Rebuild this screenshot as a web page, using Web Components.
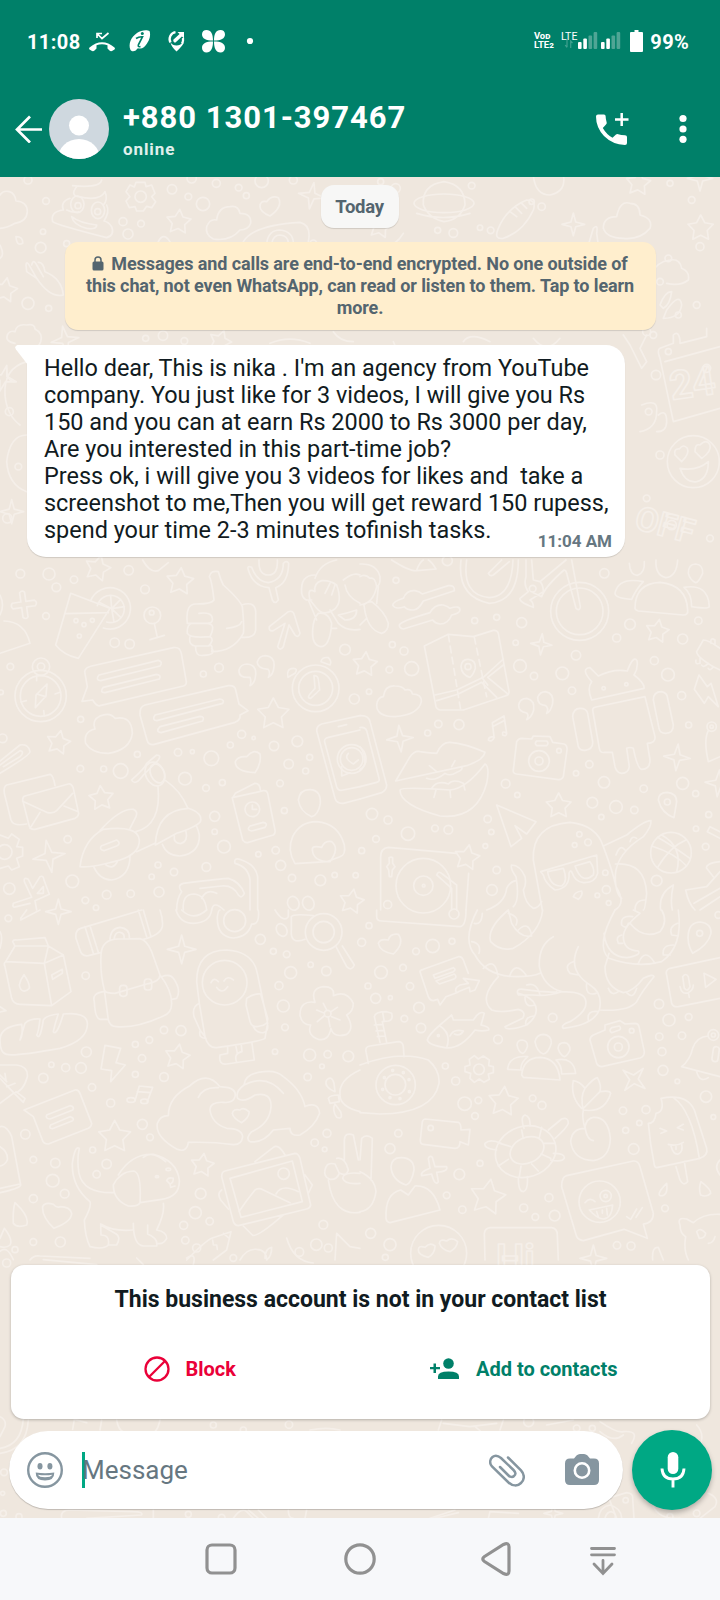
<!DOCTYPE html>
<html lang="en">
<head>
<meta charset="utf-8">
<title>Chat</title>
<style>
    html, body{
        margin: 0;
    }

    body{
        font-family: Roboto, "Liberation Sans", sans-serif;
        height: 1600px;
        overflow: hidden;
        width: 720px;
    }
</style>
</head>
<body>
<chat-screen>
    <status-bar slot="top" time="11:08" battery="99%"></status-bar>
    <app-bar slot="top">
        <span slot="name">+880 1301-397467</span>
        <span slot="state">online</span>
    </app-bar>
    <date-chip>Today</date-chip>
    <encryption-notice>Messages and calls are end-to-end encrypted. No one outside of<br>this chat, not even WhatsApp, can read or listen to them. Tap to learn<br>more.</encryption-notice>
    <message-bubble time="11:04 AM">Hello dear, This is nika . I'm an agency from YouTube
company. You just like for 3 videos, I will give you Rs
150 and you can at earn Rs 2000 to Rs 3000 per day,
Are you interested in this part-time job?
Press ok, i will give you 3 videos for likes and  take a
screenshot to me,Then you will get reward 150 rupess,
spend your time 2-3 minutes tofinish tasks.</message-bubble>
    <contact-card slot="bottom">
        <span slot="title">This business account is not in your contact list</span>
        <span slot="block">Block</span>
        <span slot="add">Add to contacts</span>
    </contact-card>
    <message-composer slot="bottom">Message</message-composer>
    <nav-bar slot="nav"></nav-bar>
</chat-screen>

<script>
class BaseElement extends HTMLElement
{
    constructor()
    {
        super();
        this.attachShadow({mode: "open"});
    }

    connectedCallback()
    {
        const template = document.createElement("template");
        template.innerHTML = `<style>${this.getStyles()}</style>${this.getTemplate()}`;
        this.shadowRoot.appendChild(template.content.cloneNode(true));
    }
}

class ChatScreen extends BaseElement
{
    getTemplate()
    {
        return `
            <slot name="top"></slot>
            <main>
                <chat-wallpaper></chat-wallpaper>
                <section><slot></slot></section>
                <footer><slot name="bottom"></slot></footer>
            </main>
            <slot name="nav"></slot>
        `;
    }

    getStyles()
    {
        return `
            :host{
                display: flex;
                flex-direction: column;
                height: 1600px;
                width: 720px;
            }

            main{
                background: #efe7de;
                display: flex;
                flex: 1;
                flex-direction: column;
                justify-content: space-between;
                min-height: 0;
                overflow: hidden;
                position: relative;
            }

            section{
                align-items: flex-start;
                display: flex;
                flex-direction: column;
                padding-top: 8px;
                position: relative;
            }

            footer{
                display: flex;
                flex-direction: column;
                gap: 11px;
                padding-bottom: 8px;
                position: relative;
            }
        `;
    }
}

class StatusBar extends BaseElement
{
    getTemplate()
    {
        return `
            <span class="time">${this.getAttribute("time")}</span>
            <svg class="left" width="170" height="28" viewBox="86 27 170 28" fill="#fff">
                <path d="M89.500 47.500Q102 37 114.500 47.500Q115.500 48.500 114.500 49.500L112 51Q110.500 51.500 109.500 50.500L107.500 48.500V45.300Q102 43 96.500 45.300V48.500L94.500 50.500Q93.500 51.500 92 51L89.500 49.500Q88.500 48.500 89.500 47.500Z"/>
                <path d="M97 38V33.500H102M97.500 34L102 38.500L108.500 33" fill="none" stroke="#fff" stroke-width="1.700"/>
                <path d="M130.500 50C128 44 131 37 137 33C141 30 147 29.500 149.500 31C151 35 149.500 40 147 43.500C145 47 142 49 139.500 48.500C138.500 48.500 138 47.500 137 49C135.500 51.500 132 52 130.500 50Z"/>
                <circle cx="142.300" cy="33.600" r="1.500" fill="#008069"/>
                <path d="M136 38.500Q139 36.500 142.500 36.800L138.500 44.500Q137.500 47.500 140.500 46.500" fill="none" stroke="#008069" stroke-width="1.700"/>
                <path d="M170.500 42.500Q172.500 45.500 176.500 45.500T182.500 42.500H184Q182 46.500 176.500 51.500Q171.500 47 170.500 42.500Z"/>
                <path d="M175.500 32.200A7 7 0 0 0 170.500 42.500M183 38Q183.500 41 182 43.500" fill="none" stroke="#fff" stroke-width="2.300"/>
                <path d="M177.500 32H184V38.500L181.900 36.400L175.500 42.500Q173 42.500 173.300 39.700L179.600 34.100Z"/>
                <path d="M213 40.500C206 40.500 202 38.500 202 34.200C202 31.500 204 30 206.500 30C211 30 213 34 213 40.500ZM214 40.500C214 34 216 30 220.500 30C223 30 225 31.500 225 34.200C225 38.500 221 40.500 214 40.500ZM213 41.600C213 48.500 211 52.500 206.500 52.500C204 52.500 202 50.500 202 48C202 43.500 206 41.600 213 41.600ZM214 41.600C221 41.600 225 43.500 225 48C225 50.500 223 52.500 220.500 52.500C216 52.500 214 48.500 214 41.600Z"/>
                <circle cx="250" cy="41" r="3.100"/>
            </svg>
            <span class="volte"><span>Vo<b>D</b></span><span>LTE<b>2</b></span></span>
            <span class="lte">LTE</span>
            <svg class="right" width="83" height="28" viewBox="560 27 83 28" fill="#fff">
                <path d="M567 40V47M565.200 45L567 47.500M570.700 48V41L572.500 43" fill="none" stroke="#40a08f" stroke-width="1.200"/>
                <rect x="578" y="42" width="3.600" height="7" rx="1"/>
                <rect x="583.300" y="38.500" width="3.600" height="10.500" rx="1"/>
                <rect x="588.500" y="35.500" width="3.600" height="13.500" rx="1" fill="#4fa595"/>
                <rect x="593.600" y="32" width="3.600" height="17" rx="1" fill="#4fa595"/>
                <rect x="601" y="42" width="3.600" height="7" rx="1"/>
                <rect x="606.300" y="38.500" width="3.600" height="10.500" rx="1"/>
                <rect x="611.500" y="35.500" width="3.600" height="13.500" rx="1" fill="#4fa595"/>
                <rect x="616.600" y="32" width="3.600" height="17" rx="1" fill="#4fa595"/>
                <path d="M634.500 30h4v2h3.500q1 0 1 1v18q0 1-1 1h-11q-1 0-1-1V33q0-1 1-1h3.500z"/>
            </svg>
            <span class="battery">${this.getAttribute("battery")}</span>
        `;
    }

    getStyles()
    {
        return `
            :host{
                align-items: center;
                background: #008069;
                box-sizing: border-box;
                color: #fff;
                display: flex;
                font-size: 20px;
                font-weight: 700;
                height: 84px;
                padding: 0 31px 2px 27px;
            }

            svg{
                flex: none;
            }

            .time{
                letter-spacing: .4px;
                padding-top: 2px;
                width: 59px;
            }

            .volte{
                display: flex;
                flex-direction: column;
                font: 700 9.500px/8.500px Roboto, sans-serif;
                margin-left: auto;
                width: 24px;
            }

            .volte b{
                font-size: 8px;
            }

            .lte{
                font: 400 10.500px/12px Roboto, sans-serif;
                margin: -9px -17px 0 3px;
            }

            .battery{
                letter-spacing: .3px;
                margin-left: 7px;
                padding-top: 2px;
            }
        `;
    }
}

class AppBar extends BaseElement
{
    getTemplate()
    {
        return `
            <svg class="back" width="28" height="28" viewBox="0 0 28 28" fill="none" stroke="#fff" stroke-width="2.700"><path d="M27 14.500H2M15 1.500L2 14.500L15 27.500"/></svg>
            <svg class="avatar" width="60" height="60" viewBox="0 0 60 60">
                <clipPath id="round"><circle cx="30" cy="30" r="30"/></clipPath>
                <g clip-path="url(#round)">
                    <rect width="60" height="60" fill="#cfd8df"/>
                    <circle cx="30" cy="26.500" r="10" fill="#fff"/>
                    <ellipse cx="30" cy="60" rx="21" ry="20" fill="#fff"/>
                </g>
            </svg>
            <div class="who">
                <slot name="name"></slot>
                <slot name="state"></slot>
            </div>
            <svg class="call" width="34" height="34" viewBox="0 0 34 34">
                <path fill="#fff" d="M1 4.500Q1 2.500 3 2.500H9Q10.500 2.500 10.600 4Q10.700 7.500 11.700 10.500Q12 11.700 11 12.500L7.800 16Q11.500 22.500 17.500 25.800L21 22.500Q22 21.700 23.200 22.200Q26 23 30 23.300Q32 23.400 32 25V31Q32 33 30 33Q17.500 32.500 9 24Q1 15.500 1 4.500Z"/>
                <path d="M26.700 1V14M20 7.500H33.500" stroke="#fff" stroke-width="2.500"/>
            </svg>
            <svg class="more" width="8" height="30" viewBox="0 0 8 30" fill="#fff"><circle cx="4" cy="4.500" r="3.600"/><circle cx="4" cy="15" r="3.600"/><circle cx="4" cy="25.300" r="3.600"/></svg>
        `;
    }

    getStyles()
    {
        return `
            :host{
                align-items: center;
                background: #008069;
                box-sizing: border-box;
                color: #fff;
                display: flex;
                height: 93px;
                padding: 0 33px 3px 15px;
            }

            svg{
                flex: none;
            }

            .avatar{
                margin: 0 14px 0 6px;
            }

            .who{
                display: flex;
                flex: 1;
                flex-direction: column;
                padding-top: 3px;
                white-space: nowrap;
            }

            ::slotted([slot="name"]){
                font-size: 31px;
                font-weight: 700;
                letter-spacing: .950px;
                line-height: 36px;
            }

            ::slotted([slot="state"]){
                color: #e0f0ed;
                font-size: 17px;
                font-weight: 700;
                letter-spacing: .9px;
                line-height: 24px;
                margin-top: 1px;
            }

            .call{
                margin-right: 50px;
            }
        `;
    }
}

class DateChip extends BaseElement
{
    getTemplate()
    {
        return `<slot></slot>`;
    }

    getStyles()
    {
        return `
            :host{
                align-self: center;
                background: #f7f7f6;
                border-radius: 13px;
                box-shadow: 0 1px 1px rgba(0, 0, 0, .13);
                box-sizing: border-box;
                color: #54656f;
                font: 700 18.500px/44px Roboto, sans-serif;
                height: 43px;
                letter-spacing: -.3px;
                margin-right: 1px;
                text-align: center;
                width: 78px;
            }
        `;
    }
}

class EncryptionNotice extends BaseElement
{
    getTemplate()
    {
        return `<svg width="12" height="15" viewBox="0 0 12 15"><path d="M3 7V4Q3 1 6 1T9 4V7" fill="none" stroke="#54656f" stroke-width="1.500"/><rect x=".5" y="5.500" width="11" height="9" rx="1.500" fill="#54656f"/></svg><slot></slot>`;
    }

    getStyles()
    {
        return `
            :host{
                align-self: center;
                background: #ffeecd;
                border-radius: 13px;
                box-shadow: 0 1px 1px rgba(0, 0, 0, .13);
                box-sizing: border-box;
                color: #54656f;
                display: block;
                font: 700 18px/22px Roboto, sans-serif;
                height: 88px;
                letter-spacing: -.1px;
                margin-top: 14px;
                padding-top: 11px;
                text-align: center;
                white-space: nowrap;
                width: 591px;
            }

            svg{
                margin-right: 7px;
                vertical-align: -1px;
            }
        `;
    }
}

class MessageBubble extends BaseElement
{
    getTemplate()
    {
        return `
            <svg width="13" height="20" viewBox="0 0 13 20"><path d="M2.500 0H13V20L1 4.500Q-1 1 2.500 0Z" fill="#fff"/></svg>
            <p><slot></slot></p>
            <time>${this.getAttribute("time")}</time>
        `;
    }

    getStyles()
    {
        return `
            :host{
                background: #fff;
                border-radius: 0 19px 19px 19px;
                box-shadow: 0 1px 1px rgba(0, 0, 0, .13);
                box-sizing: border-box;
                color: #111b21;
                display: grid;
                height: 212px;
                margin: 15px 0 0 27px;
                padding: 10px 13px 5px 17px;
                position: relative;
                width: 598px;
            }

            svg{
                left: -12px;
                position: absolute;
                top: 0;
            }

            p{
                font-size: 23.450px;
                grid-area: 1 / 1;
                line-height: 27px;
                margin: 0;
                white-space: pre;
            }

            time{
                align-self: end;
                color: #667781;
                font: 700 17px/20px Roboto, sans-serif;
                grid-area: 1 / 1;
                justify-self: end;
                margin-bottom: 1px;
            }
        `;
    }
}

class ContactCard extends BaseElement
{
    getTemplate()
    {
        return `
            <slot name="title"></slot>
            <div class="actions">
                <button class="block">
                    <svg width="26" height="26" viewBox="0 0 26 26" fill="none" stroke="#ea0038" stroke-width="2.300"><circle cx="13" cy="13" r="11.500"/><path d="M21 5L5 21"/></svg>
                    <slot name="block"></slot>
                </button>
                <button class="add">
                    <svg width="30" height="22" viewBox="0 0 30 22" fill="#008069"><circle cx="18.500" cy="5.500" r="5.300"/><path d="M8 21V18.500Q8 13.500 18.500 13.500T29 18.500V21ZM3.500 5.500H6V9H10V11.300H6V15H3.500V11.300H0V9H3.500Z"/></svg>
                    <slot name="add"></slot>
                </button>
            </div>
        `;
    }

    getStyles()
    {
        return `
            :host{
                background: #fff;
                border-radius: 13px;
                box-shadow: 0 1px 3px rgba(0, 0, 0, .25);
                box-sizing: border-box;
                color: #111b21;
                display: flex;
                flex-direction: column;
                height: 154px;
                margin: 0 10px 0 11px;
                padding-top: 21px;
            }

            ::slotted([slot="title"]){
                font-size: 23px;
                font-weight: 700;
                line-height: 27px;
                text-align: center;
            }

            .actions{
                display: grid;
                grid-template-columns: 1fr 1fr;
                margin-top: 43px;
            }

            button{
                align-items: center;
                background: none;
                border: 0;
                display: flex;
                font: 700 20px/26px Roboto, sans-serif;
                gap: 16px;
                justify-content: center;
                padding: 0;
            }

            .block{
                color: #ea0038;
                padding-left: 8px;
            }

            .add{
                color: #008069;
                padding-right: 23px;
            }
        `;
    }
}

class MessageComposer extends BaseElement
{
    getTemplate()
    {
        return `
            <div class="field">
                <svg width="36" height="36" viewBox="0 0 36 36">
                    <circle cx="18" cy="18" r="16.800" fill="none" stroke="#8696a0" stroke-width="2.400"/>
                    <ellipse cx="13" cy="14.200" rx="2.500" ry="3.200" fill="#8696a0"/>
                    <ellipse cx="22.900" cy="14.200" rx="2.500" ry="3.200" fill="#8696a0"/>
                    <path d="M8.700 20.500Q18 21.800 27.300 20.500Q27.500 28.500 18 28.500T8.700 20.500Z" fill="#8696a0"/>
                    <path d="M11 22.800Q18 23.800 25.300 22.800Q24 25.300 18 25.300T11 22.800Z" fill="#fff"/>
                </svg>
                <i></i>
                <span class="hint"><slot></slot></span>
                <svg width="36" height="33" viewBox="0 0 36 33" fill="none" stroke="#8696a0" stroke-width="2.500" stroke-linecap="round"><path d="M19 3.500L32 16.300C36 20.500 35.500 26 32 29C28.500 32.500 23.500 32 19.500 28.500L3 12.500C0 9 1 5 3.500 3C6 1 9 1.500 12 4L24.500 16C27 18.500 27 20.500 25 22C23.500 23.500 21 23 19.500 21.500L11 13"/></svg>
                <svg class="camera" width="34" height="31" viewBox="0 0 34 31"><path d="M5 4.500H9L11.500 1.500Q13 0 15 0H19Q21 0 22.500 1.500L25 4.500H29Q34 4.500 34 9.500V26Q34 31 29 31H5Q0 31 0 26V9.500Q0 4.500 5 4.500Z" fill="#8696a0"/><circle cx="17" cy="16.500" r="7.200" fill="#8696a0" stroke="#fff" stroke-width="2.600"/></svg>
            </div>
            <button>
                <svg width="26" height="36" viewBox="0 0 26 36"><rect x="7.700" y="0" width="10.600" height="22" rx="5.300" fill="#fff"/><path d="M2 16.500Q2.500 27 13 27T24 16.500M13 27V35.500" fill="none" stroke="#fff" stroke-width="2.900"/></svg>
            </button>
        `;
    }

    getStyles()
    {
        return `
            :host{
                align-items: center;
                display: flex;
                gap: 9px;
                padding: 0 8px 0 9px;
            }

            .field{
                align-items: center;
                background: #fff;
                border-radius: 39px;
                box-shadow: 0 1px 1px rgba(0, 0, 0, .2);
                box-sizing: border-box;
                color: #667781;
                display: flex;
                flex: 1;
                font-size: 26px;
                height: 78px;
                padding: 0 24px 0 18px;
            }

            i{
                background: #00a884;
                height: 36px;
                margin: 0 -3px 0 19px;
                width: 3px;
            }

            .hint{
                flex: 1;
            }

            .camera{
                margin: -2px 0 0 40px;
            }

            button{
                align-items: center;
                background: #00a884;
                border: 0;
                border-radius: 50%;
                box-shadow: 0 3px 5px rgba(0, 0, 0, .25);
                display: flex;
                height: 80px;
                justify-content: center;
                padding: 0 0 0 1px;
                width: 80px;
            }
        `;
    }
}

class NavBar extends BaseElement
{
    getTemplate()
    {
        return `
            <svg width="32" height="34" viewBox="0 0 32 34"><rect x="2" y="3" width="28" height="28" rx="5"/></svg>
            <svg width="32" height="34" viewBox="0 0 32 34"><circle cx="16" cy="17" r="14.200"/></svg>
            <svg width="30" height="34" viewBox="0 0 30 34"><path d="M3.500 14.500L22.500 2.500Q28 0 28 5V29Q28 34 22.500 31.500L3.500 19.500Q0 17 3.500 14.500Z"/></svg>
            <svg width="26" height="34" viewBox="0 0 26 34" style="stroke-linecap: round"><path d="M1.500 6.500H24.500M1.500 12.800H24.500M13 18.500V31.500M4 22L13 31.500L22 22"/></svg>
        `;
    }

    getStyles()
    {
        return `
            :host{
                background: #f7f8fa;
                box-sizing: border-box;
                display: flex;
                height: 82px;
                padding: 24px 0 0 205px;
            }

            svg{
                fill: none;
                stroke: #919191;
                stroke-width: 3.200px;
            }

            svg:nth-of-type(2){
                margin-left: 107px;
            }

            svg:nth-of-type(3){
                margin-left: 105px;
            }

            svg:nth-of-type(4){
                margin-left: 79px;
                stroke-width: 2.800px;
            }
        `;
    }
}

// Wallpaper panels. Doodles are drawn on a 3x grid, "at" is the panel's corner on the screen.
const panels = [
    {
        at: [0, 175],
        dots: "84 15 12 138 78 10 129 170 8 122 218 16 84 385 18 146 400 9 516 43 14 565 65 10 649 25 12 716 38 10 739 62 9 785 18 20 609 87 20 369 140 12 423 146 10 384 177 15 437 490 9 489 482 14 553 498 10 575 10 14 880 15 12 940 205 10 200 206 9",
        stars: "536 141 38 5 15 346 38 10 660 500 35 20",
        sparks: "935 62 40 10 195 495 42 -10 10 610 40 15",
        paths: `
            <path d="M0 60Q10 45 28 50Q45 55 48 78Q82 80 82 110Q80 140 45 145Q20 160 0 160"/>
            <path d="M218 32Q300 40 305 15M230 35Q210 60 235 65Q300 80 315 50Q325 75 310 90M210 70Q180 80 190 105Q150 110 158 140Q170 150 320 188Q345 180 335 155Q325 140 312 138Q330 110 320 90M200 105Q220 115 235 110M215 125Q240 145 290 150Q290 165 260 160Q220 150 215 125"/>
            <ellipse cx="232" cy="88" rx="20" ry="25"/><ellipse cx="294" cy="106" rx="20" ry="25"/><circle cx="234" cy="92" r="9"/><circle cx="293" cy="110" r="9"/>
            <circle cx="422" cy="65" r="17"/><path d="M408 22L435 22L438 35L455 30L465 55L455 65L467 80L455 98L440 94L430 108H410L405 95L388 98L378 78L390 65L378 50L390 30L403 36Z"/>
            <path d="M780 95Q780 75 800 80Q815 60 835 68Q850 95 810 123Q780 110 780 95Z"/>
            <path d="M640 192Q615 180 620 155Q630 130 650 135Q655 95 690 95Q715 90 720 115Q755 115 752 145Q745 165 720 165Q690 200 640 192Z"/>
            <path d="M730 200Q760 150 900 142Q935 150 925 200M800 205Q805 165 840 165Q880 170 880 205M815 205Q820 180 840 180Q865 182 865 205M475 200Q490 170 510 200"/>
            <path d="M80 290L78 270Q80 255 90 275L110 310M95 270Q100 250 110 270L130 305M115 262Q130 260 135 290Q185 310 190 360Q150 370 110 310L80 290"/>
            <path d="M45 505Q15 500 22 480Q30 465 45 470Q50 445 80 450Q105 445 105 462Q130 475 122 500Q115 520 95 515"/>
            <path d="M48 185Q70 185 68 205Q50 215 48 185ZM0 210Q15 240 0 250M810 505Q870 480 930 505M1000 470Q1020 500 1060 500"/>`
    },
    {
        at: [360, 175],
        dots: "62 20 9 107 40 14 335 32 10 360 158 8 392 166 10 233 166 9 280 174 13 515 80 8 545 95 11 930 25 9 995 75 10 1020 215 12 925 250 10 1010 390 10 900 320 10 955 420 9 880 480 10 925 530 9 1040 580 12",
        stars: "835 25 38 5 1022 160 40 0 60 155 36 10",
        sparks: "640 148 34 0 1020 10 38 0",
        paths: `
            <ellipse cx="252" cy="85" rx="90" ry="28"/><path d="M190 90Q185 30 252 20Q315 30 315 90Q300 135 252 140Q205 130 190 90M170 115Q250 140 330 115"/>
            <path d="M430 190Q400 195 415 160Q440 100 500 75Q530 75 520 105Q490 170 430 190ZM450 110L470 125M465 95L485 115M485 85L500 100"/>
            <path d="M520 0Q525 60 570 60Q620 50 610 0M730 160Q730 125 770 125Q780 75 810 85Q840 85 840 120Q880 130 870 160Q840 195 790 190Q740 190 730 160Z"/>
            <path d="M685 210L700 160Q715 145 710 175L715 210M50 210Q100 225 130 175M80 300Q100 340 160 350M870 300Q890 260 930 255Q960 250 965 280Q990 290 985 315Q960 335 920 325"/>
            <path d="M900 390Q915 350 935 350Q930 390 910 400ZM920 405Q960 350 965 390Q960 430 910 430ZM790 480L810 510L845 580L860 560L840 520L860 480M100 500L125 560M310 500Q330 470 390 500M520 490Q560 540 600 490"/>`
    },
    {
        at: [640, 325],
        dots: "20 20 12 48 150 14 26 260 10 60 390 12 20 520 10 95 600 14 210 640 10",
        stars: "",
        sparks: "",
        paths: `
            <path d="M60 70L100 55V30Q115 15 120 45V55L200 35V10M60 70Q50 75 60 100L100 290L240 250M75 110L240 65"/>
            <text x="95" y="225" font-size="120" font-weight="bold" transform="rotate(-8 95 225)">24</text>
            <path d="M5 240Q55 220 50 260Q50 310 0 320M55 270Q80 250 80 290Q80 320 50 320"/>
            <circle cx="160" cy="410" r="78"/><path d="M105 390Q100 370 118 372Q130 355 142 370Q150 385 125 410ZM165 380Q165 355 180 360Q200 340 210 360Q215 380 185 400ZM120 430Q170 440 205 410Q205 460 170 470Q135 475 120 430Z"/>
            <text x="-20" y="610" font-size="100" font-weight="bold" transform="rotate(15 -20 610)">OFF</text>`
    },
    {
        at: [0, 345],
        dots: "28 200 12 55 365 10 22 520 14",
        stars: "",
        sparks: "35 500 36 0",
        paths: `<path d="M80 50Q10 70 15 150Q20 210 60 240M80 270Q30 270 20 350Q25 420 80 440M20 70Q20 110 45 110"/>`
    },
    {
        at: [0, 560],
        dots: "61 41 13 147 42 18 222 59 11 386 31 14 169 82 13 435 88 13 138 168 10 344 248 14 389 252 14 31 320 10 610 342 9 657 323 13 242 478 9 412 583 9 534 577 11 577 575 6 634 595 22 691 555 9 725 523 12 761 534 5 822 558 14 892 544 16 929 592 9 866 612 14 917 633 9 241 626 10 311 627 9 362 633 22 555 656 19 618 684 10 667 668 9 644 769 15 644 815 8 672 860 19 853 752 9 840 670 10 775 883 8 827 871 11 842 916 15 203 838 11 217 964 19 28 986 17 320 1004 13 392 1001 11 256 1021 10 288 1043 8 477 996 15 522 936 11 455 950 8 474 915 9 619 921 13 876 954 11 961 961 16 1004 945 8 1067 946 8 1035 269 16 1063 417 15 8 535 13 3 397 7",
        stars: "293 25 40 15 540 65 42 5 175 548 37 12 820 463 49 0 304 715 38 -5 1055 1025 38 10",
        sparks: "147 889 49 -10",
        paths: `
            <g transform="rotate(-8 71 135)"><path d="M64 97Q72 90 79 97V125H105Q115 133 105 142H79V172Q72 180 64 172V142H38Q30 133 38 125H64Z"/></g>
            <path d="M212 100L330 145L235 295Q190 285 167 255ZM196 161L325 158"/><path d="M272 122A62 62 0 1 1 310 204M292 137A41 41 0 1 1 320 186M335 146L332 108M335 146L362 118M335 146L373 140M335 146L362 172M335 146L342 186M335 146L300 128"/>
            <circle cx="228" cy="182" r="6"/><circle cx="252" cy="194" r="6"/><circle cx="277" cy="181" r="6"/><circle cx="238" cy="228" r="6"/>
            <circle cx="457" cy="166" r="25"/><circle cx="455" cy="158" r="7"/><path d="M463 191L472 232M450 239L493 226"/>
            <path d="M562 190Q555 130 590 132Q635 132 642 120Q635 60 628 50Q632 30 655 35Q662 60 670 75Q720 120 727 140Q733 200 730 220Q700 275 635 275Q640 250 625 258Q645 240 630 230Q650 190 620 190Q640 190 637 175Q635 155 597 160M562 190H625M575 190Q560 195 562 220Q570 235 630 230M570 230Q565 255 585 258H625M587 258Q585 290 610 286Q650 285 635 265M680 205Q720 200 725 185M725 135Q770 120 767 165V210Q765 235 725 232"/>
            <path d="M428 0Q450 40 475 32L505 8M745 30Q740 15 755 22Q770 65 805 68Q850 60 850 10Q860 0 866 10Q865 70 827 83L835 120Q825 135 817 120L807 83Q760 80 745 30ZM777 0Q775 45 805 45Q835 45 832 0"/>
            <path d="M808 200L865 155Q880 150 883 165L900 220Q895 235 885 225L867 195L850 260Q840 275 833 260L855 190L820 212Q805 215 808 200Z"/>
            <path d="M945 55Q960 10 1010 0M945 45Q900 45 905 100Q910 125 935 120M925 120L950 180M930 120Q920 80 945 95Q940 70 965 62Q990 60 1010 75Q1030 130 1000 150Q970 170 950 145ZM975 100L990 70M995 105L1005 75M990 150L1015 190Q1040 215 1080 208M955 160Q985 155 995 190Q990 260 962 260Q935 255 938 210Q940 175 955 160M1035 75Q1040 110 1080 130M1030 60Q1060 35 1080 45M1015 165Q1040 160 1070 150Q1070 180 1035 180ZM995 205H1010"/>
            <path d="M12 183Q75 185 90 250L0 280M0 105Q15 135 0 165"/>
            <circle cx="122" cy="408" r="77"/><circle cx="122" cy="408" r="61"/><circle cx="123" cy="320" r="26"/><circle cx="123" cy="320" r="11"/><path d="M141 372L108 405L106 443L138 408ZM110 402L137 410M110 348V362M165 402L180 397M131 452L133 468M63 426L79 422"/>
            <path d="M275 318L520 263Q540 260 544 280L559 365Q560 375 550 378L300 437Q290 440 278 420L246 424L262 380L254 335Q256 322 275 318Z"/>
            <path d="M297 345L475 301Q490 305 480 318L302 362Q285 360 297 345ZM310 382L470 343Q485 345 478 357L315 398Q297 398 310 382Z"/>
            <path d="M435 435L685 377Q705 375 707 390L717 432L744 452L720 465Q722 480 705 487L460 554Q445 555 441 540L420 465Q418 440 435 435Z"/>
            <path d="M465 465L660 417Q675 420 668 430L470 482Q455 480 465 465ZM480 500L600 469Q615 470 608 483L483 518Q465 515 480 500Z"/>
            <path d="M742 312Q770 315 767 345Q765 370 750 377Q755 365 750 352Q715 355 717 330Q722 312 742 312ZM797 287Q825 290 822 320Q820 345 805 352Q812 340 805 328Q770 325 772 305Q778 287 797 287Z"/>
            <circle cx="947" cy="385" r="70"/><circle cx="947" cy="385" r="51"/><path d="M942 347Q955 345 956 365L959 390L932 415Q920 415 930 402L945 385ZM864 352Q858 325 880 325Q895 325 885 340ZM963 305Q965 290 985 293Q997 305 990 315Z"/>
            <path d="M345 475Q330 455 300 468Q275 480 285 507Q250 515 257 550Q275 580 325 580Q390 570 397 520Q395 465 345 475Z"/>
            <path d="M0 603L60 555Q85 550 90 575Q90 585 0 640M0 615L60 572Q75 575 60 590L10 620"/>
            <path d="M706 605Q712 588 740 590Q760 565 780 582Q785 610 765 638Q705 635 706 605Z"/>
            <path d="M20 675L150 643Q160 645 165 677M20 675Q10 680 13 700L33 780Q40 800 80 792M75 708L205 672Q215 670 220 685L236 760Q235 770 225 775L105 808Q90 810 87 795L68 720Q68 710 75 708ZM68 724L140 757Q160 762 170 752L218 700M90 805L120 757M192 738L235 755"/>
            <path d="M395 660Q435 625 440 610L470 585Q485 585 475 600L430 645Q405 680 395 660Z"/><ellipse cx="465" cy="642" rx="28" ry="37" transform="rotate(-25 465 642)"/><ellipse cx="472" cy="640" rx="20" ry="30" transform="rotate(-25 472 640)"/>
            <path d="M474 680Q485 795 408 815M497 662Q540 690 564 745M300 812Q360 745 400 748Q415 755 408 770L390 805M240 920Q250 840 310 808Q415 795 418 840Q420 880 360 900Q270 925 240 920ZM466 855Q470 750 565 745Q610 760 601 785Q590 800 530 820ZM410 875L465 850M305 857L350 840Q365 850 350 858L312 872Q295 868 305 857ZM282 922Q300 960 335 960Q390 950 390 887M318 915Q340 930 352 905M487 853Q500 888 540 888Q600 880 598 825Q595 810 590 800M523 828Q520 850 542 851Q565 845 558 815"/>
            <path d="M706 700Q700 710 697 715L728 840Q735 850 745 847L820 825Q827 820 825 810L803 700Q800 690 790 692L697 713M706 700L765 670Q780 670 781 690"/><circle cx="757" cy="748" r="22"/><path d="M757 735V748H770M750 798L790 787Q805 790 795 802L755 813Q738 810 750 798Z"/>
            <path d="M1080 467L965 492Q945 500 952 520L1005 715Q1010 732 1030 730L1080 717M1080 510L985 532Q970 535 975 550L1010 680Q1015 695 1030 690L1080 680M1015 500L1040 494"/><circle cx="1055" cy="597" r="43"/><circle cx="1055" cy="597" r="34"/><path d="M1045 580Q1030 595 1060 612L1075 600M1025 620V648L1050 638"/>
            <path d="M895 720Q900 688 930 689Q963 690 961 730Q955 765 935 770Q900 755 895 720ZM885 911Q860 870 878 830Q900 785 950 785Q1015 790 1033 855Q1038 885 1020 890L980 905ZM937 870Q935 855 965 862Q975 840 995 845Q1020 865 990 905Q940 905 937 870Z"/>
            <circle cx="14" cy="876" r="22"/><path d="M0 825L25 835L35 822L58 838L50 860L68 862V888L50 895L58 920L35 930L25 918L0 925"/>
            <path d="M73 965Q70 950 85 958L98 985L120 950Q130 945 132 960L148 1003L105 1022L110 1050M73 965L95 1012L40 1030Q35 1045 50 1040L90 1030M130 980L112 1000L130 1000Z"/>
            <path d="M705 910Q700 890 725 900Q768 915 773 950V1050M705 910Q745 920 750 960V1050M550 970Q670 955 685 955Q720 965 733 1000Q725 1018 715 1005Q700 975 665 978L600 985M550 970Q530 975 545 995Q530 1015 530 1050M550 1050Q545 1002 583 1002Q615 1005 620 1050M605 1015Q620 985 650 1000M635 1050Q640 1020 672 1050"/>
            <ellipse cx="880" cy="1030" rx="17" ry="21" transform="rotate(-20 880 1030)"/><ellipse cx="925" cy="1030" rx="17" ry="21" transform="rotate(-20 925 1030)"/>`
    },
    {
        at: [360, 560],
        dots: "108 61 9 262 2 15 344 182 9 410 172 9 485 188 15 467 248 8 97 254 9 132 273 12 155 326 21 88 329 10 27 395 8 480 318 19 522 348 11 607 340 19 648 286 14 636 392 11 235 492 11 297 494 15 203 519 9 688 613 11 648 640 8 437 671 13 472 705 8 733 40 14 810 193 16 770 234 12 968 237 15 1015 182 11 883 302 12 924 344 19 965 407 12 986 495 9 732 667 17 851 686 11 968 670 18 1007 701 9 697 728 16 768 741 19 823 750 11 724 771 8 1046 764 9 1008 806 8 383 777 11 394 816 8 36 762 17 84 780 12 144 821 20 225 805 10 265 809 13 48 837 10 376 858 7 5 872 9 410 930 11 396 990 16 83 1034 12 890 962 16 1037 860 10 658 823 8 684 847 10 644 855 7 736 938 8 739 989 12 712 1006 7 746 1029 7",
        stars: "15 313 38 5 892 214 36 10 596 738 39 0 321 893 39 10",
        sparks: "544 253 32 5 120 536 40 -5 951 592 40 5 1075 670 40 5",
        paths: `
            <path d="M95 0Q150 35 170 32L228 27Q215 5 205 0M170 30Q180 5 190 0M0 12Q50 10 60 50Q62 75 50 80M55 80L50 130M0 135Q40 130 50 80Q45 50 30 55Q15 40 0 50M12 135Q20 125 35 125Q75 155 85 190Q85 215 65 220Q20 210 12 135M0 195L20 175"/>
            <path d="M98 135Q100 125 130 115Q140 90 165 92Q180 95 187 102L265 77Q285 75 283 92L190 123Q175 150 160 150Q140 150 133 140Q105 150 98 135ZM118 195Q120 185 210 158Q225 132 250 135Q265 140 270 145Q300 135 300 150Q300 160 275 165Q265 192 240 192Q225 190 218 180L130 207Q118 205 118 195Z"/>
            <path d="M303 0Q290 110 388 130Q475 125 475 0M320 0Q305 105 388 113Q455 110 459 0M425 0L385 40Q390 50 400 45L448 5M498 0V50Q490 75 505 95L480 115Q475 125 520 142Q520 125 510 120L550 95Q550 75 540 65L618 0M515 0L520 60L540 65M520 98L545 110Q555 80 612 30Q618 30 620 40L648 145Q660 155 661 140L635 0"/><circle cx="659" cy="154" r="87"/><circle cx="659" cy="154" r="70"/><circle cx="518" cy="86" r="10"/>
            <path d="M808 10Q810 45 832 46Q855 40 853 5M888 0Q885 45 917 53Q950 50 953 0M985 40Q985 12 1007 12Q1030 15 1028 40Q1015 68 1007 68Q990 60 985 40ZM825 145Q825 70 900 67Q980 75 983 150Q985 165 970 165L835 153Q825 150 825 145ZM765 100Q775 50 850 65Q830 85 815 118Q765 115 765 100ZM972 82Q1045 70 1048 140Q1045 148 995 140Q995 100 972 82Z"/>
            <path d="M193 258L265 223L340 230L400 211Q412 210 415 220L447 395Q448 405 435 408L310 450L240 450Q230 448 228 440ZM225 405L290 390L370 352L430 297M230 422L295 402L365 367L410 412M383 352L445 403M383 352L430 315M365 352L383 375"/><path stroke-dasharray="20 14" d="M265 225L302 450M343 232L380 410"/>
            <path d="M303 320Q305 297 325 298Q348 300 346 325Q340 345 330 352Q305 345 303 320Z"/><circle cx="324" cy="320" r="9"/>
            <path d="M70 410Q75 375 105 378Q128 378 135 390Q155 385 157 402Q185 402 184 425Q175 465 105 470Q50 470 50 435Q52 412 70 410Z"/>
            <path d="M500 415Q525 420 521 450Q515 472 500 479Q508 465 500 459Q475 455 476 435Q480 415 500 415ZM557 395Q582 400 578 430Q572 455 560 460Q567 445 557 437Q532 435 533 412Q540 395 557 395Z"/>
            <path d="M402 530L397 488L432 468L440 520M397 500L432 482M402 530Q385 530 385 540Q395 548 403 532M440 520Q425 510 428 525Q440 530 440 520"/>
            <path d="M0 467Q25 465 30 485L80 675Q80 690 65 698L0 717M0 503Q15 500 20 512L57 655Q60 665 50 667L0 680M0 560Q15 580 15 610Q10 625 0 628"/>
            <path d="M107 663L150 590Q165 570 180 575Q215 580 230 580Q245 545 270 547Q315 550 375 577Q370 600 320 617ZM120 690Q125 680 270 690Q320 685 375 612Q390 620 380 670Q350 780 240 768Q120 735 120 690ZM200 655Q225 665 255 640Q270 650 290 637Q310 630 305 620M215 685Q230 660 265 672Q280 655 310 670L315 690M208 617L230 635M285 602L275 620M228 690L222 712M270 692L272 712"/>
            <path d="M485 535L515 537L520 528L570 530L578 547L612 552Q622 555 621 570L610 650Q605 660 595 659L470 642Q458 640 460 630L470 545Q475 535 485 535ZM530 543H560Q568 550 560 557H530Q522 550 530 543Z"/><circle cx="537" cy="603" r="31"/><circle cx="537" cy="603" r="12"/><circle cx="597" cy="572" r="7"/>
            <path d="M695 420Q680 385 695 365Q660 325 690 323L715 348Q760 325 802 333Q820 285 831 302Q835 325 822 345Q855 370 852 385ZM698 450Q698 443 708 441L855 410L885 530Q887 550 862 550L870 600Q870 628 845 628Q832 625 820 565Q810 560 800 565L808 620Q805 640 785 640Q770 638 765 620L757 577H735Q720 580 718 565ZM638 470Q640 445 660 445Q680 445 683 460L698 545Q700 568 675 571Q660 572 655 560ZM880 420Q880 395 905 395Q922 398 923 415L940 495Q940 520 917 520Q900 520 897 505Z"/><circle cx="731" cy="385" r="5"/><circle cx="799" cy="373" r="5"/>
            <path d="M1010 275L1030 240Q1045 240 1080 265M1010 275Q1010 290 1060 320L1080 330M1008 300Q1005 315 1020 310V293M1025 315Q1030 325 1045 310M1045 325Q1050 335 1060 320M1053 250Q1050 230 1065 240V255M1017 345L1042 380L1053 370L1075 440L1045 410L1033 430L1003 388Z"/><circle cx="1055" cy="500" r="14"/><circle cx="1055" cy="500" r="5"/><path d="M1045 512Q1030 540 1045 605L1080 590"/>
            <path d="M410 735L528 785L500 822L465 797L485 835L453 860ZM62 1050L62 890Q62 865 85 862L290 880M326 940L318 1050"/><circle cx="190" cy="977" r="82"/><circle cx="190" cy="977" r="29"/><circle cx="191" cy="977" r="4"/><path d="M230 945Q235 930 247 942L290 975V1050M230 945L275 985V1050M87 893Q93 890 98 893V910L105 920L97 930L95 950H88L86 930L80 920L88 910Z"/>
            <path d="M547 1050L520 900Q515 795 630 787Q710 795 730 860Q760 940 768 980Q800 1030 765 1050M542 935L710 885L713 940Q705 970 670 968Q645 965 635 935Q630 930 627 940Q630 985 585 990Q555 970 550 945ZM563 935L610 925Q625 965 605 978Q570 980 563 935ZM645 918L690 905Q705 925 700 945Q665 975 645 918ZM640 1010Q645 995 665 993Q670 1005 655 1018ZM730 858L800 825Q855 780 873 782Q875 800 850 830Q770 880 766 945Q765 1000 785 1015M766 912Q855 905 860 1000Q855 1050 850 1050M768 885Q780 850 795 870M810 845Q815 825 830 835M825 1050Q825 1020 855 1020"/>
            <path d="M455 915Q480 915 495 950Q500 975 490 990Q495 1030 520 1045Q535 1045 545 1025M455 915Q450 925 468 950Q480 1020 460 1040M380 1050Q435 1030 440 985Q450 965 468 962"/>
            <path d="M895 720Q895 697 922 697Q950 700 950 725L942 773Q905 760 895 720Z"/><circle cx="922" cy="726" r="9"/><circle cx="933" cy="878" r="61"/><path d="M875 858Q945 880 980 918M905 825Q970 860 950 936M893 922Q930 860 978 840M893 832Q925 850 990 895"/>
            <path d="M940 975Q895 1000 902 1050M940 975Q930 1020 937 1050M977 990L1040 980L1080 935M977 990Q985 1030 1005 1050M1002 1030L1080 985M1020 1050L1080 1010M1040 925Q1035 910 1080 905M1040 925L1060 950M1080 815L1050 800L1042 815L1080 835"/>`
    },
    {
        at: [0, 910],
        dots: "25 25 10 257 197 11 492 360 11 543 362 15 448 390 10 406 403 9 426 445 11 406 493 9 492 501 13 259 426 15 154 464 8 197 473 12 243 474 16 130 504 14 276 532 11 332 579 12 427 643 15 450 682 10 76 673 14 278 720 9 320 762 14 290 793 11 166 759 14 100 749 10 158 812 19 194 851 13 100 866 12 181 996 15 100 996 10 781 88 15 820 124 9 860 133 10 932 164 8 979 183 14 872 188 18 837 227 12 850 288 18 855 352 10 825 425 8 929 435 18 983 433 11 1045 439 16 966 469 7 923 501 11 981 670 12 944 698 11 974 718 7 602 851 16 586 908 18 629 934 11 551 946 12 556 991 11 970 944 13 949 1004 17 898 1026 13",
        stars: "532 441 39 10 344 681 50 0 607 766 36 8",
        sparks: "545 118 43 0 175 5 38 0",
        paths: `
            <path d="M62 25L80 0M62 30L120 0M17 155L45 108L38 95Q40 88 50 90L135 83L145 108H45M17 155Q10 160 15 170L35 265Q40 283 60 283L155 287L213 245L190 135L145 108L133 160L155 287M17 155L133 160L190 135M155 195L187 178V190L158 208ZM72 194Q90 220 88 235Q80 245 70 243Q60 240 58 225Q60 210 72 194Z"/>
            <path d="M302 128L265 137Q245 140 240 120L228 85Q225 60 242 55L425 0M255 50L280 130M270 47L295 127M415 0L440 80M430 0L453 80M480 0Q490 30 487 50Q480 75 430 88M330 92Q330 55 360 52Q390 55 388 85M342 88Q345 65 360 67Q375 70 372 85M303 135Q305 85 360 87L420 86Q440 90 455 125L480 195Q480 215 440 222L345 250Q315 250 313 240Q300 190 303 135ZM313 240L325 330Q330 350 350 350Q410 355 490 318Q515 310 515 280Q515 240 480 195M311 245Q275 250 283 275Q285 325 300 328H325M485 200Q510 190 520 205Q545 240 530 265L515 268"/><rect x="359" y="226" width="22" height="33" rx="9"/><rect x="433" y="207" width="22" height="33" rx="9"/>
            <path d="M0 65Q10 80 0 115M0 290L18 302L0 306M0 390Q0 350 65 343Q70 375 60 390L75 340Q90 325 120 327Q115 370 110 375Q120 395 130 330Q140 315 175 312Q165 340 160 365Q170 380 190 312Q260 305 262 340Q265 390 180 415Q40 440 20 433Q0 430 0 390ZM0 465H50Q85 470 82 500Q70 545 40 550L0 580M0 505L43 550L70 577L75 565L48 545M0 495L20 515M15 490L18 512M45 520L20 530"/>
            <path d="M528 0Q540 40 580 40Q630 38 635 0M545 0Q580 35 620 0M652 20Q655 0 660 0M652 20Q650 80 700 84Q745 80 755 42Q780 45 775 0"/><circle cx="704" cy="32" r="33"/><ellipse cx="845" cy="60" rx="15" ry="20" transform="rotate(-30 845 60)"/><path d="M915 88Q870 105 874 60V20Q880 10 940 17M825 0Q850 40 865 20V0"/><circle cx="971" cy="66" r="55"/><circle cx="971" cy="66" r="32"/><path d="M1008 110L1040 170Q1055 185 1063 165L1027 108"/>
            <path d="M590 215Q590 120 680 120Q760 125 772 190L803 340Q800 355 795 385Q780 395 650 413Q625 415 615 380L598 280ZM598 280Q575 290 582 320L600 360L615 380M600 363Q595 385 618 385M740 265Q760 250 782 252L803 325Q805 345 780 348Q755 355 750 335L738 285ZM760 350Q770 370 790 368Q805 365 803 345M660 435Q655 465 680 462L763 450L756 400M660 435L683 430V412M710 457Q700 430 726 425L724 405M708 410L712 430M633 218Q642 200 655 215M672 213Q683 195 700 210M650 232Q665 255 683 230"/><circle cx="674" cy="218" r="67"/>
            <path d="M945 277Q930 235 970 230Q1005 230 1000 257Q1040 240 1060 280Q1060 305 1040 315Q1065 355 1040 373Q1000 385 993 355Q985 395 955 388Q920 375 932 345Q905 345 900 315Q900 270 945 277Z"/><circle cx="983" cy="311" r="10"/><path d="M970 280L980 300M1012 292L993 305M995 320L1020 330M985 322L990 350M972 318L952 335M970 308L950 300"/>
            <path d="M315 406L362 415L348 458L376 465L332 515L335 482L303 477ZM418 528L458 532L442 575M418 528L405 572M412 545L452 548"/><ellipse cx="393" cy="570" rx="12" ry="7"/><ellipse cx="433" cy="574" rx="11" ry="7"/>
            <path d="M72 600L225 540Q235 538 240 550L275 640Q275 650 265 655L145 702Q130 702 127 690L100 620ZM140 615L210 587Q225 590 218 600L150 627Q135 625 140 615ZM152 645L210 620Q225 625 218 632L157 656Q145 655 152 645Z"/>
            <path d="M505 617Q505 560 570 527Q620 480 660 530L685 533Q710 540 705 560Q700 580 670 577Q630 575 630 600Q635 640 680 655Q725 655 728 680Q725 705 700 704Q640 695 565 697Q560 730 530 717Q465 680 472 640Q480 617 505 617M595 562Q610 530 655 533M915 590Q905 540 850 500Q830 480 790 485Q735 490 732 525Q705 545 713 565Q730 580 765 555Q815 545 813 590Q810 640 755 665Q735 685 750 695Q790 700 820 660L870 655Q870 680 900 675Q945 650 959 610Q955 575 918 588M732 525Q800 490 850 550M697 610Q700 595 720 600Q730 590 747 605Q750 620 725 638Q700 625 697 610Z"/>
            <path d="M0 650Q20 645 35 680L62 825Q60 835 0 848M0 835L60 822M0 710Q25 725 22 750Q15 765 0 768M217 760Q225 705 238 715Q230 750 237 790Q250 850 340 848M217 760Q215 830 270 875Q275 890 253 930Q255 980 270 1010Q310 1020 325 1005H350Q365 980 345 970L302 945L303 975Q330 975 325 1005M302 942Q340 965 398 960M400 940Q400 1005 430 1008H470Q475 985 443 972V945M490 880Q495 910 470 960Q500 965 500 985Q490 1005 470 1000M355 795Q395 730 460 733Q530 750 538 810Q540 860 485 868L420 878Q415 890 385 888Q340 870 340 825Q360 785 400 783Q425 785 420 878M430 742Q455 720 497 755"/><ellipse cx="471" cy="800" rx="5" ry="3"/><ellipse cx="505" cy="778" rx="7" ry="4"/><path d="M500 812Q505 800 520 805Q520 820 510 822ZM510 822L512 832L525 828"/>
            <path d="M128 890Q135 875 160 883Q170 895 180 890Q210 890 215 910Q215 935 162 955Q125 920 128 890ZM45 878Q90 920 80 945Q50 955 40 940Q38 900 45 878ZM13 955Q40 990 30 1005Q20 1015 0 1010M0 985L13 955"/>
            <path d="M675 783L885 730Q895 730 900 745L932 885Q930 895 920 897L715 947Q705 947 700 935L665 800Q665 785 675 783ZM690 805L877 753L907 875L723 922ZM717 905Q740 870 765 840Q775 832 790 840L870 878M828 852Q845 820 895 845M765 755L820 712Q835 700 855 735M915 795L937 825L925 850M665 840Q650 850 662 870L685 897M730 948L757 975Q770 985 850 915"/><circle cx="851" cy="791" r="17"/>
            <path d="M560 1050Q620 990 635 985L693 965L680 1020L640 1050M670 970L688 985M638 990L640 1005H650L652 1018M90 1050Q100 1035 120 1038L270 1045M720 1050Q740 1015 770 1018Q800 1020 800 1050M795 1045Q795 1015 815 1012Q815 1040 800 1050M1005 1050L1010 970L1050 1010L1080 1015"/>
            <path d="M1080 480Q1015 510 1020 555Q1020 590 1080 605M1005 545Q970 530 980 510Q995 495 1002 520ZM985 565Q990 555 1015 555L1018 575L990 580ZM1005 582Q995 600 1010 622Q1030 630 1022 605ZM1033 750V690Q1035 665 1060 675L1075 750M975 780Q980 755 1005 762L1018 790Q1010 810 990 808Q970 800 975 780M1010 745Q1035 740 1045 780Q1040 800 1020 790M1028 805Q1030 785 1080 790M1028 805Q1035 825 1080 820M985 810Q1000 920 1080 907"/>`
    },
    {
        at: [360, 910],
        dots: "27 47 9 5 97 12 63 187 19 129 173 10 168 124 10 218 108 20 276 94 9 24 228 9 150 229 11 47 265 15 91 263 6 177 293 16 133 326 10 183 354 14 256 468 9 287 513 12 314 581 20 355 571 10 345 618 10 115 670 11 90 716 15 360 760 9 298 793 16 260 856 10 307 899 11 32 970 15 90 1004 18 76 1042 9 414 388 13 578 323 13 518 565 10 546 586 12 789 602 11 858 599 12 838 639 8 797 661 9 821 717 16 897 282 14 927 330 18 986 321 10 898 380 11 966 377 11 906 425 12 909 481 15 952 514 7 1038 560 17 1060 621 7 915 895 10 567 863 12 491 894 12 526 921 10 584 917 16 771 1006 11 813 1008 12 1075 15 10 282 12 15",
        stars: "430 575 46 5 383 862 55 10",
        sparks: "822 508 43 40 700 1045 40 0",
        paths: `
            <path d="M50 0V20Q50 32 65 33L300 50Q318 48 318 0M55 100Q60 85 85 90Q90 70 115 73Q135 100 100 132Q60 125 55 100Z"/>
            <path d="M190 178L295 140Q305 138 310 150L325 190M180 185Q180 180 190 178M180 185L205 260Q210 272 220 272L233 268L240 285L258 260L290 248M220 195L280 173Q290 178 280 185L225 205ZM228 213L283 192Q292 200 284 206L238 222ZM290 248Q280 235 300 225L325 220L310 205L358 212L345 240L330 245L328 232L300 243Z"/>
            <path d="M352 0Q305 90 345 135Q380 200 470 200Q520 200 540 190M548 0Q540 70 460 115Q420 125 392 95Q380 55 445 0M445 0L455 40Q480 85 515 78M445 10Q480 20 468 45M475 60Q505 30 515 75M343 40Q365 45 367 10M335 95Q365 100 357 130M370 175Q405 140 413 195M448 200Q465 150 498 195M580 80Q535 105 538 170Q550 230 605 245M655 110Q620 180 690 225Q730 250 718 300Q700 345 610 355Q600 345 630 335Q690 300 675 265Q665 245 605 245Q560 260 520 255L475 255Q465 235 490 238Q590 250 590 245M415 200Q355 265 395 300Q420 310 475 298Q500 305 488 325L435 350Q440 365 500 345Q545 310 520 275Q500 255 475 250M495 262Q495 295 525 285M500 225Q530 215 540 255M497 345Q495 320 520 318M640 155Q610 165 630 190L655 195M680 220Q675 260 708 250M685 330Q680 300 715 305M720 300Q805 305 830 275Q845 245 882 200Q880 190 850 205Q820 245 790 248Q735 230 735 170L747 130"/>
            <path d="M765 0Q705 110 747 145Q830 175 905 155Q970 110 955 0M820 0L840 10Q790 50 790 80Q790 120 835 123Q845 135 800 143Q740 140 732 70M810 40Q850 90 900 65Q925 35 905 0M818 20Q780 15 785 45Q800 60 805 40M785 75Q765 80 775 100L788 100M835 160Q855 110 885 160M940 105Q905 105 910 135L930 135M953 40Q925 50 935 75L955 78M745 235Q755 260 775 245M800 248Q820 270 830 235"/>
            <path d="M985 70Q990 37 1020 36Q1055 40 1053 70Q1045 105 998 130Q980 100 985 70Z"/><circle cx="1019" cy="70" r="9"/><path d="M1080 143L930 175Q915 180 920 195L935 280Q940 292 955 290L1080 265M1032 190L1068 208L1037 232ZM968 200Q978 187 985 200L990 230Q983 247 973 235ZM960 230Q965 255 985 248Q1000 240 1000 225M985 248L988 262"/>
            <path d="M60 397L43 320Q45 305 80 305L95 310Q100 330 85 333L67 335L80 397M43 345L68 343M48 363L73 361M52 380L76 378M68 307L72 330M25 460L18 425Q15 410 30 408L115 395Q128 395 130 410L132 440M0 465Q120 420 205 450Q240 480 237 520Q220 610 60 612L0 608"/><circle cx="107" cy="525" r="59"/><circle cx="106" cy="524" r="31"/><circle cx="98" cy="481" r="3"/><circle cx="130" cy="488" r="3"/><circle cx="147" cy="509" r="3"/><circle cx="148" cy="545" r="3"/><circle cx="120" cy="566" r="3"/><circle cx="90" cy="563" r="3"/><circle cx="68" cy="538" r="3"/><circle cx="73" cy="503" r="3"/>
            <path d="M202 390Q205 375 240 345L275 315L280 330H340Q360 300 373 310L363 345Q390 350 386 360Q365 365 345 360Q300 420 255 413Q205 405 202 390ZM240 348Q275 370 260 413M270 378Q280 355 310 363Q300 380 283 372"/><circle cx="235" cy="377" r="3"/>
            <circle cx="357" cy="478" r="16"/><path d="M343 437L355 447L370 438L388 450L386 467L400 470V488L385 492L388 508L372 517L358 507L343 517L330 505L332 490L315 485V470L330 465L328 448Z"/>
            <path d="M471 405Q472 390 487 390Q504 392 502 410Q495 430 487 430Q475 425 471 405ZM525 395Q530 373 550 373Q575 375 574 400Q565 430 550 432Q530 425 525 395ZM594 415Q595 398 613 398Q630 400 630 420Q622 438 613 440Q600 435 594 415ZM485 495Q490 443 540 442Q595 445 600 510L490 502ZM443 475Q450 435 503 440Q480 460 483 480L443 478ZM588 450Q640 440 647 490L605 492Q605 465 588 450Z"/>
            <path d="M640 512Q660 515 675 535Q700 505 712 503Q725 525 720 545Q750 540 752 550Q735 610 670 600Q665 620 675 655Q635 655 632 695Q640 750 700 752Q750 745 751 685Q745 620 700 622Q680 625 675 650Q680 690 700 692M665 595Q630 560 640 512M670 600Q660 560 675 535M720 545L670 595"/>
            <path d="M700 375L735 360V345L780 332L795 342L825 340Q835 340 837 350L853 425Q853 440 840 444L725 470Q715 470 710 460L690 390Q690 380 700 375ZM755 353L778 348Q785 355 778 360L755 368Q745 362 755 353Z"/><circle cx="775" cy="411" r="32"/><circle cx="775" cy="411" r="12"/><circle cx="815" cy="362" r="7"/>
            <path d="M965 470Q990 450 998 415Q1010 380 1045 378M965 470L1080 500M1010 485Q1020 520 1045 503"/><circle cx="1060" cy="375" r="16"/><circle cx="1060" cy="375" r="6"/><rect x="1058" y="410" width="18" height="45" rx="9" transform="rotate(8 1067 432)"/>
            <path d="M195 627L295 637Q303 640 303 660L330 658L325 705L300 695Q300 715 285 715L190 703Q180 702 181 690L187 635Q190 627 195 627Z"/><circle cx="212" cy="654" r="8"/>
            <ellipse cx="497" cy="725" rx="92" ry="76" transform="rotate(-18 497 725)"/><ellipse cx="501" cy="721" rx="53" ry="38" transform="rotate(-25 501 721)"/><path d="M492 655Q480 620 495 615Q512 620 510 648M565 660L605 627Q625 620 625 640Q620 655 585 685M410 720Q370 715 375 700Q390 685 423 700M580 730Q615 730 613 745Q605 757 572 750M475 803Q475 845 490 845Q505 840 502 800M485 660L490 685M545 652L538 682M553 700L585 700M543 732L572 745M515 762L535 783M483 768L478 800M445 748L415 768M452 710L420 700"/>
            <path d="M865 640Q885 640 888 610Q915 605 903 565Q980 550 1003 600L1040 715Q1045 735 1020 745L890 773Q885 773 883 765Q870 700 865 640ZM940 563Q995 600 1018 745M948 770L960 810Q970 830 983 815L973 755M900 655L920 663L903 670M970 643L952 653L970 660M925 703Q950 710 970 697M933 708Q940 735 955 732Q970 725 965 702M948 710V718"/>
            <path d="M620 797L820 753Q835 752 840 770L880 910Q880 940 850 942L862 985L792 958L670 992Q655 990 650 980L605 830Q605 800 620 797Z"/><circle cx="719" cy="875" r="62"/><circle cx="737" cy="858" r="17"/><circle cx="737" cy="858" r="5"/><path d="M675 878Q690 860 705 875M688 900L758 885Q755 925 730 927Q710 925 688 900ZM710 905L715 920M727 900V910M740 895L742 915M800 920L812 928L830 897M828 922L847 893M920 820Q890 850 900 857Q925 860 920 820ZM1023 815Q1055 840 1052 850Q1040 863 1022 855Q1015 835 1023 815Z"/>
            <path d="M93 770Q95 742 125 743Q163 745 162 780Q155 820 138 825Q95 810 93 770ZM78 925Q75 850 122 840L145 855L165 828Q220 825 240 900L90 938Q80 937 78 925ZM5 685Q20 670 37 685L33 810M0 750L5 685M0 785Q45 805 48 845Q40 900 0 905M217 742L225 770L260 770Q265 785 230 787L235 815Q225 830 215 792L185 797Q180 785 210 775L205 745Q210 735 217 742Z"/>
            <circle cx="236" cy="1030" r="84"/><path d="M175 1020Q175 1005 195 1012Q210 995 225 1008Q225 1030 205 1042Q175 1035 175 1020ZM238 1000Q240 985 260 993Q275 980 293 995Q290 1015 270 1025Q245 1020 238 1000ZM375 1050L373 970Q375 955 390 953H575Q592 955 592 975L595 1050"/><text x="408" y="1088" font-size="120" font-weight="bold">Hi</text>
            <path d="M960 945Q950 920 980 927L1000 938Q1030 910 1080 913M960 945Q960 970 977 980Q970 1020 985 1050M1010 965Q1020 950 1037 970Q1035 985 1018 985ZM1045 1000Q1060 1000 1065 980M878 1050Q875 1010 895 1012L910 1050M1080 750Q1060 770 1080 795"/>`
    },
    {
        at: [0, 1238],
        dots: "20 75 12 45 35 9 590 30 12 700 60 10 985 30 12",
        stars: "",
        sparks: "",
        paths: `<path d="M130 65L290 80M0 40Q20 20 40 65M580 80Q590 40 560 60M860 0Q880 70 940 75M410 60L430 80"/>`
    },
    {
        at: [0, 1410],
        dots: "12 187 10 8 250 6 10 310 9 57 320 9 867 44 11 665 323 10 565 313 9 640 45 9 730 60 9",
        stars: "",
        sparks: "",
        paths: `<path d="M0 130Q80 120 85 30M0 115Q65 105 70 25M0 20Q20 30 15 50L0 80M218 58L223 28L260 38M300 60L305 30M350 30Q355 60 370 65M480 30Q475 55 465 65M185 325Q180 300 210 300L400 305Q430 305 425 315L260 325M460 300V325M700 325Q725 290 740 305L760 325M745 300L775 325M775 300L800 325M865 300Q865 325 880 325M920 300L915 325M930 60Q980 50 1020 60"/>`
    },
    {
        at: [360, 1410],
        dots: "506 35 15 650 55 10 697 55 9 797 271 8 930 320 9 1010 310 10",
        stars: "",
        sparks: "580 310 28 0",
        paths: `<path d="M235 60L245 30M420 60L430 30M250 40L330 50L410 40M345 50L360 62M560 45L640 30M1010 45Q1035 70 1020 110M720 35Q770 70 790 65Q840 60 815 100M720 65Q760 100 790 75M760 260L800 248Q820 250 818 265L822 325M745 260L770 325M715 325Q720 290 750 285Q785 295 785 325M735 325Q740 305 755 305Q770 310 765 325M210 325L285 300M225 325L295 308M385 325L390 305L475 310M880 290Q900 330 960 325M1045 250Q1080 265 1065 290L1020 325"/>`
    }
];

class ChatWallpaper extends BaseElement
{
    numbers(text)
    {
        return text ? text.split(" ").map(Number) : [];
    }

    getDots(text)
    {
        const n = this.numbers(text);
        let out = "";
        for (let i = 0; i + 2 < n.length; i += 3)
            out += `<circle cx="${n[i]}" cy="${n[i + 1]}" r="${n[i + 2]}"/>`;
        return out;
    }

    getPoints(text, count, inner)
    {
        const n = this.numbers(text);
        let out = "";
        for (let i = 0; i + 3 < n.length; i += 4) {
            const points = [];
            for (let k = 0; k < count * 2; k++) {
                const r = k % 2 ? n[i + 2] * inner : n[i + 2];
                const a = Math.PI * k / count - Math.PI / 2 + n[i + 3] * Math.PI / 180;
                points.push((n[i] + r * Math.cos(a)).toFixed(1) + "," + (n[i + 1] + r * Math.sin(a)).toFixed(1));
            }
            out += `<polygon points="${points.join(" ")}"/>`;
        }
        return out;
    }

    getTemplate()
    {
        const groups = panels.map(p => `
            <g transform="translate(${p.at[0]} ${p.at[1] - 177}) scale(.33333)">
                ${this.getDots(p.dots)}
                ${this.getPoints(p.stars, 5, .52)}
                ${this.getPoints(p.sparks, 4, .3)}
                ${p.paths}
            </g>`).join("");
        return `<svg width="720" height="1341" viewBox="0 0 720 1341">${groups}</svg>`;
    }

    getStyles()
    {
        return `
            :host{
                display: block;
                inset: 0;
                position: absolute;
            }

            svg{
                display: block;
                fill: none;
                stroke: #f5efe9;
                stroke-linecap: round;
                stroke-linejoin: round;
                stroke-width: 5px;
            }
        `;
    }
}

customElements.define("chat-wallpaper", ChatWallpaper);
customElements.define("chat-screen", ChatScreen);
customElements.define("status-bar", StatusBar);
customElements.define("app-bar", AppBar);
customElements.define("date-chip", DateChip);
customElements.define("encryption-notice", EncryptionNotice);
customElements.define("message-bubble", MessageBubble);
customElements.define("contact-card", ContactCard);
customElements.define("message-composer", MessageComposer);
customElements.define("nav-bar", NavBar);
</script>
</body>
</html>
